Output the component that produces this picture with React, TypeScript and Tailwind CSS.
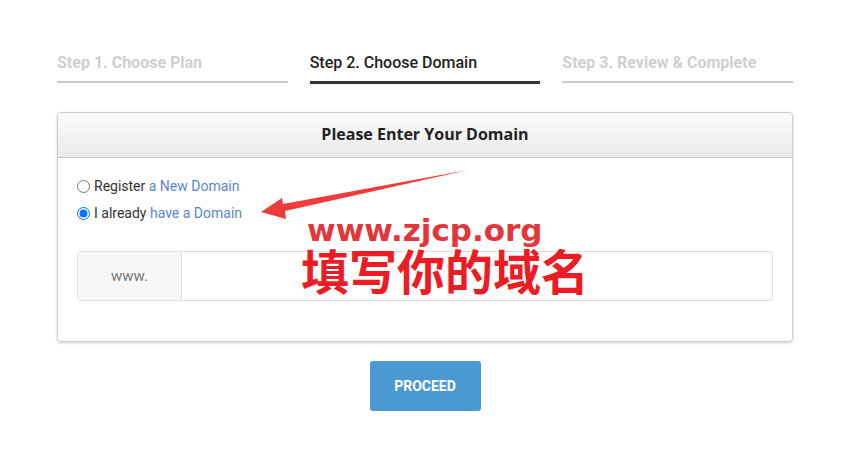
const steps = [
  { label: "Step 1. Choose Plan", active: false },
  { label: "Step 2. Choose Domain", active: true },
  { label: "Step 3. Review & Complete", active: false },
];

export default function App() {
  return (
    <main className="relative min-h-screen w-[850px] bg-white font-['Roboto',sans-serif] text-[#333]">
      <div className="mx-[57px] flex w-[736px] flex-col">
        <div className="grid grid-cols-3 gap-[22px] pt-[53px]">
          {steps.map((step) => (
            <div
              key={step.label}
              className={
                step.active
                  ? "h-[31px] border-b-[3px] border-[#333] text-[16px] font-medium leading-[20px] text-[#222]"
                  : "h-[30px] border-b-2 border-[#ccc] text-[16px] font-bold leading-[20px] text-[#cfcfcf]"
              }
            >
              {step.label}
            </div>
          ))}
        </div>

        <section className="mt-[28px] rounded-[4px] border border-[#cdcdcd] shadow-[0_1px_3px_rgba(0,0,0,0.18)]">
          <div className="flex h-[45px] items-center justify-center rounded-t-[4px] border-b border-[#c8c8c8] bg-gradient-to-b from-[#fbfbfb] to-[#eaeaea] pb-[3px]">
            <h2 className="font-['Open_Sans',sans-serif] text-[16px] font-bold text-[#222]">
              Please Enter Your Domain
            </h2>
          </div>

          <div className="px-[19px] pt-[15px] pb-[40px]">
            <label className="flex h-[27px] items-center gap-[4px] text-[14px]">
              <input type="radio" name="domain" className="m-0 h-[13px] w-[13px]" />
              <span>
                Register <span className="text-[#5a86cf]">a New Domain</span>
              </span>
            </label>
            <label className="flex h-[27px] items-center gap-[4px] text-[14px]">
              <input
                type="radio"
                name="domain"
                defaultChecked
                className="m-0 h-[13px] w-[13px]"
              />
              <span>
                I already <span className="text-[#5a86cf]">have a Domain</span>
              </span>
            </label>

            <div className="mt-[24px] flex h-[50px] overflow-hidden rounded-[4px] border border-[#dedede]">
              <div className="flex w-[104px] items-center justify-center border-r border-[#dedede] bg-[#f7f7f7] text-[15px] text-[#777]">
                www.
              </div>
              <input className="flex-1 px-3 text-[14px] outline-none" />
            </div>
          </div>
        </section>

        <div className="mt-[19px] flex justify-center">
          <button className="h-[50px] w-[111px] rounded-[3px] bg-[#4b99d2] text-[14px] font-bold text-white">
            PROCEED
          </button>
        </div>
      </div>

      <svg
        className="pointer-events-none absolute left-0 top-0"
        width="850"
        height="460"
        viewBox="0 0 850 460"
      >
        <polygon
          points="261,212 282,198 283,204 468,170 285,211 286,219"
          fill="#f03b3b"
        />
      </svg>
      <div className="pointer-events-none absolute left-[307px] top-[215px] font-['DejaVu_Sans',sans-serif] text-[31px] font-bold leading-none text-[#e4363a]">
        www.zjcp.org
      </div>
      <div className="pointer-events-none absolute left-[301px] top-[245px] font-['Noto_Sans_CJK_SC',sans-serif] text-[48px] font-bold leading-none text-[#ec1c24]">
        填写你的域名
      </div>
    </main>
  );
}
